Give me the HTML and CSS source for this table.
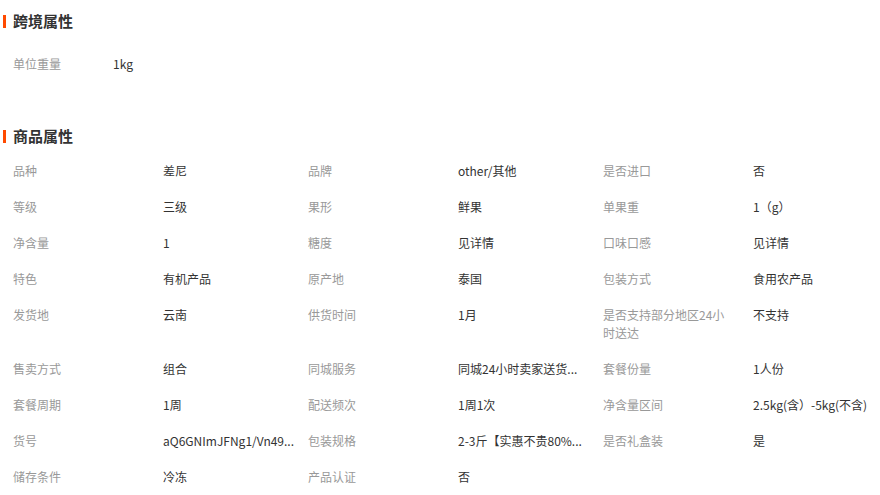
FILE: index.html
```html
<!DOCTYPE html>
<html lang="zh-CN">
<head>
<meta charset="utf-8">
<title>属性</title>
<link rel="stylesheet" href="styles.css">
</head>
<body>
<div class="page">
  <section class="block block-cross">
    <h2 class="block-title"><span class="bar"></span>跨境属性</h2>
    <div class="attrs attrs-single">
      <div class="k">单位重量</div><div class="v">1kg</div>
    </div>
  </section>
  <section class="block block-goods">
    <h2 class="block-title"><span class="bar"></span>商品属性</h2>
    <div class="attrs attrs-grid">
      <div class="k">品种</div><div class="v">差尼</div>
      <div class="k">品牌</div><div class="v">other/其他</div>
      <div class="k">是否进口</div><div class="v">否</div>

      <div class="k">等级</div><div class="v">三级</div>
      <div class="k">果形</div><div class="v">鲜果</div>
      <div class="k">单果重</div><div class="v">1（g）</div>

      <div class="k">净含量</div><div class="v">1</div>
      <div class="k">糖度</div><div class="v">见详情</div>
      <div class="k">口味口感</div><div class="v">见详情</div>

      <div class="k">特色</div><div class="v">有机产品</div>
      <div class="k">原产地</div><div class="v">泰国</div>
      <div class="k">包装方式</div><div class="v">食用农产品</div>

      <div class="k">发货地</div><div class="v">云南</div>
      <div class="k">供货时间</div><div class="v">1月</div>
      <div class="k">是否支持部分地区24小时送达</div><div class="v">不支持</div>

      <div class="k">售卖方式</div><div class="v">组合</div>
      <div class="k">同城服务</div><div class="v">同城24小时卖家送货...</div>
      <div class="k">套餐份量</div><div class="v">1人份</div>

      <div class="k">套餐周期</div><div class="v">1周</div>
      <div class="k">配送频次</div><div class="v">1周1次</div>
      <div class="k">净含量区间</div><div class="v">2.5kg(含）-5kg(不含)</div>

      <div class="k">货号</div><div class="v">aQ6GNImJFNg1/Vn49...</div>
      <div class="k">包装规格</div><div class="v">2-3斤【实惠不贵80%...</div>
      <div class="k">是否礼盒装</div><div class="v">是</div>

      <div class="k">储存条件</div><div class="v">冷冻</div>
      <div class="k">产品认证</div><div class="v">否</div>
    </div>
  </section>
</div>
</body>
</html>
```

FILE: styles.css
```css
html, body {
  margin: 0;
  padding: 0;
  background: #ffffff;
}
body {
  font-family: "Microsoft YaHei", "Noto Sans CJK SC", "Noto Sans", sans-serif;
  font-size: 12px;
  color: #333333;
  overflow: hidden;
}
.page {
  width: 880px;
  padding-left: 3px;
  box-sizing: border-box;
}
.block-title {
  display: flex;
  align-items: center;
  margin: 0;
  font-size: 15px;
  font-weight: bold;
  line-height: 20px;
  color: #333333;
}
.bar {
  display: block;
  width: 3px;
  height: 13px;
  background: #ff4a00;
  margin-right: 7px;
}
.block-cross .block-title {
  padding-top: 11px;
}
.block-goods .block-title {
  margin-top: 44px;
}
.attrs {
  display: grid;
  margin-left: 10px;
  line-height: 18px;
}
.attrs-single {
  grid-template-columns: 100px 1fr;
  margin-top: 15px;
}
.attrs-grid {
  grid-template-columns: 150px 145px 150px 145px 150px 1fr;
  margin-top: 7px;
}
.k, .v {
  padding: 9px 0;
}
.k {
  color: #999999;
  padding-right: 20px;
}
.v {
  color: #333333;
  white-space: nowrap;
  overflow: hidden;
  padding-right: 8px;
}
```
